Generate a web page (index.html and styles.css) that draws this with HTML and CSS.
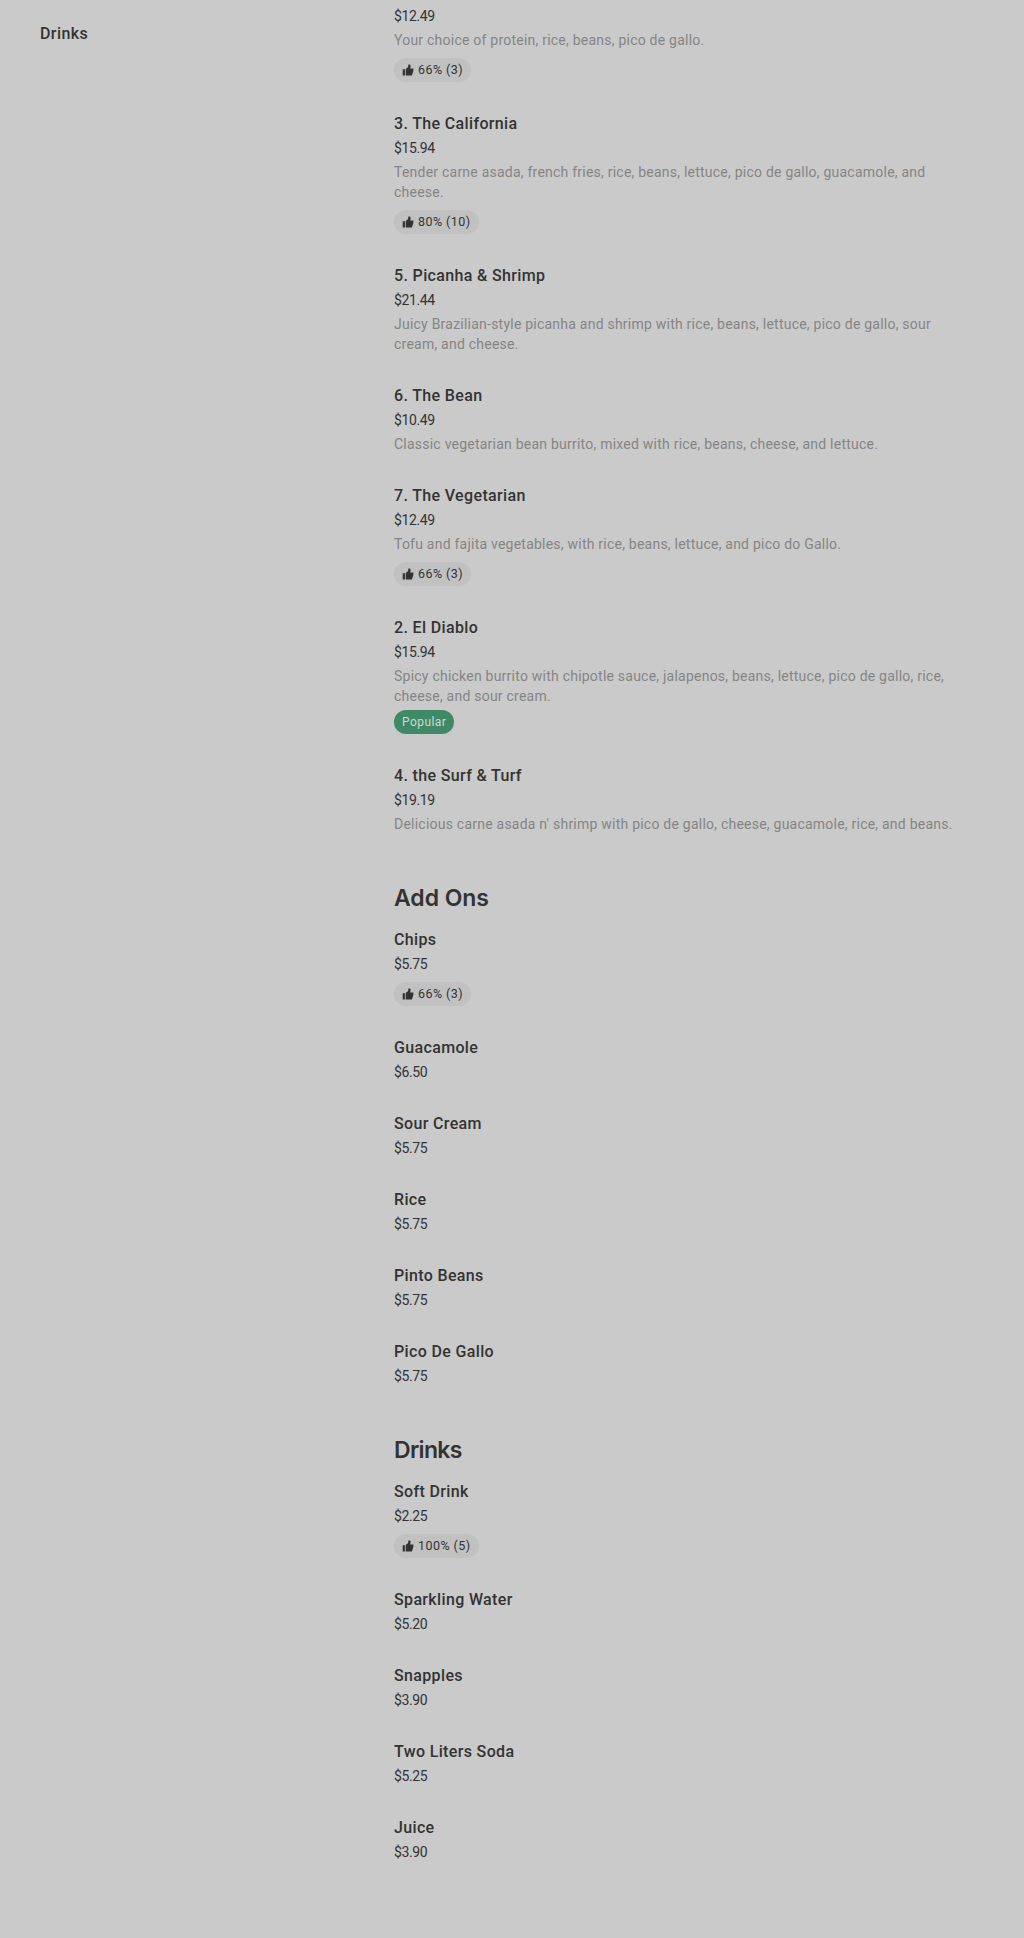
FILE: index.html
```
<!DOCTYPE html>
<html lang="en">
<head>
    <meta charset="UTF-8">
    <meta name="viewport" content="width=device-width, initial-scale=1.0">
    <title>Menu</title>
    <link rel="stylesheet" href="styles.css">
</head>
<body>
    <svg class="sprite" xmlns="http://www.w3.org/2000/svg">
        <symbol id="thumb" viewBox="0 0 12 12">
            <path d="M0.7 5.3h2.200v6.200H0.700zM3.700 5.100l2.400-2.200L6.400.5h.9c.9 0 1.400.7 1.300 1.500L8.200 4.600h3.200v2.200l-1.500 4.700H3.700z"/>
        </symbol>
    </svg>

    <div class="page">
        <nav class="sidebar">
            <a class="nav-link">Drinks</a>
        </nav>

        <main class="menu">
            <section class="section">
                <article class="item">
                    <p class="price">$12.49</p>
                    <p class="desc">Your choice of protein, rice, beans, pico de gallo.</p>
                    <div class="rating"><svg class="thumb"><use href="#thumb"/></svg>66% (3)</div>
                </article>
                <article class="item">
                    <h3 class="name">3. The California</h3>
                    <p class="price">$15.94</p>
                    <p class="desc">Tender carne asada, french fries, rice, beans, lettuce, pico de gallo, guacamole, and<br>cheese.</p>
                    <div class="rating"><svg class="thumb"><use href="#thumb"/></svg>80% (10)</div>
                </article>
                <article class="item">
                    <h3 class="name">5. Picanha &amp; Shrimp</h3>
                    <p class="price">$21.44</p>
                    <p class="desc">Juicy Brazilian-style picanha and shrimp with rice, beans, lettuce, pico de gallo, sour<br>cream, and cheese.</p>
                </article>
                <article class="item">
                    <h3 class="name">6. The Bean</h3>
                    <p class="price">$10.49</p>
                    <p class="desc">Classic vegetarian bean burrito, mixed with rice, beans, cheese, and lettuce.</p>
                </article>
                <article class="item">
                    <h3 class="name">7. The Vegetarian</h3>
                    <p class="price">$12.49</p>
                    <p class="desc">Tofu and fajita vegetables, with rice, beans, lettuce, and pico do Gallo.</p>
                    <div class="rating"><svg class="thumb"><use href="#thumb"/></svg>66% (3)</div>
                </article>
                <article class="item">
                    <h3 class="name">2. El Diablo</h3>
                    <p class="price">$15.94</p>
                    <p class="desc">Spicy chicken burrito with chipotle sauce, jalapenos, beans, lettuce, pico de gallo, rice,<br>cheese, and sour cream.</p>
                    <div class="popular">Popular</div>
                </article>
                <article class="item">
                    <h3 class="name">4. the Surf &amp; Turf</h3>
                    <p class="price">$19.19</p>
                    <p class="desc">Delicious carne asada n' shrimp with pico de gallo, cheese, guacamole, rice, and beans.</p>
                </article>
            </section>

            <section class="section">
                <h2 class="title">Add Ons</h2>
                <article class="item">
                    <h3 class="name">Chips</h3>
                    <p class="price">$5.75</p>
                    <div class="rating"><svg class="thumb"><use href="#thumb"/></svg>66% (3)</div>
                </article>
                <article class="item">
                    <h3 class="name">Guacamole</h3>
                    <p class="price">$6.50</p>
                </article>
                <article class="item">
                    <h3 class="name">Sour Cream</h3>
                    <p class="price">$5.75</p>
                </article>
                <article class="item">
                    <h3 class="name">Rice</h3>
                    <p class="price">$5.75</p>
                </article>
                <article class="item">
                    <h3 class="name">Pinto Beans</h3>
                    <p class="price">$5.75</p>
                </article>
                <article class="item">
                    <h3 class="name">Pico De Gallo</h3>
                    <p class="price">$5.75</p>
                </article>
            </section>

            <section class="section">
                <h2 class="title title-drinks">Drinks</h2>
                <article class="item">
                    <h3 class="name">Soft Drink</h3>
                    <p class="price">$2.25</p>
                    <div class="rating"><svg class="thumb"><use href="#thumb"/></svg>100% (5)</div>
                </article>
                <article class="item">
                    <h3 class="name">Sparkling Water</h3>
                    <p class="price">$5.20</p>
                </article>
                <article class="item">
                    <h3 class="name">Snapples</h3>
                    <p class="price">$3.90</p>
                </article>
                <article class="item">
                    <h3 class="name">Two Liters Soda</h3>
                    <p class="price">$5.25</p>
                </article>
                <article class="item">
                    <h3 class="name">Juice</h3>
                    <p class="price">$3.90</p>
                </article>
            </section>
        </main>
    </div>
</body>
</html>
```
FILE: styles.css
```
:root {
    --background: #cacaca;
    --text: #333;
    --muted: #858585;
    --pill: #c1c1c1;
    --green: #3f8966;
}

* {
    margin: 0;
    padding: 0;
    box-sizing: border-box;
}

body {
    min-height: 1938px;
    font-family: Roboto, "Liberation Sans", sans-serif;
    color: var(--text);
    background: var(--background);
}

.sprite {
    display: none;
}

.page {
    display: grid;
    grid-template-columns: 354px 1fr;
    padding: 6px 40px 0;
}

.sidebar {
    padding-top: 16px;
}

.nav-link {
    font-size: 16px;
    font-weight: 500;
    line-height: 24px;
    letter-spacing: 0.4px;
}

.item {
    padding-bottom: 29px;
}

.title {
    padding-top: 17px;
    margin-bottom: 11px;
    font-family: Inter, sans-serif;
    font-size: 23px;
    font-weight: 600;
    line-height: 36px;
    letter-spacing: -0.05px;
}

.title-drinks {
    letter-spacing: -0.7px;
}

.name {
    padding-top: 1px;
    margin-bottom: 2px;
    font-size: 16px;
    font-weight: 500;
    line-height: 24px;
    letter-spacing: 0.35px;
}

.price {
    font-size: 14px;
    line-height: 20px;
    letter-spacing: -0.4px;
}

.desc {
    margin-top: 4px;
    font-size: 14px;
    line-height: 20px;
    letter-spacing: 0.23px;
    color: var(--muted);
    white-space: nowrap;
}

.rating {
    display: flex;
    align-items: center;
    gap: 4px;
    width: fit-content;
    height: 24px;
    margin-top: 8px;
    padding: 0 8px 1px;
    border-radius: 12px;
    font-size: 12.5px;
    letter-spacing: 0.45px;
    background: var(--pill);
}

.thumb {
    width: 12px;
    height: 12px;
    fill: var(--text);
}

.popular {
    width: fit-content;
    height: 24px;
    margin-top: 4px;
    padding: 0 8px;
    border-radius: 12px;
    font-size: 12px;
    line-height: 24px;
    letter-spacing: 0.45px;
    color: #c8dcd0;
    background: var(--green);
}
```
